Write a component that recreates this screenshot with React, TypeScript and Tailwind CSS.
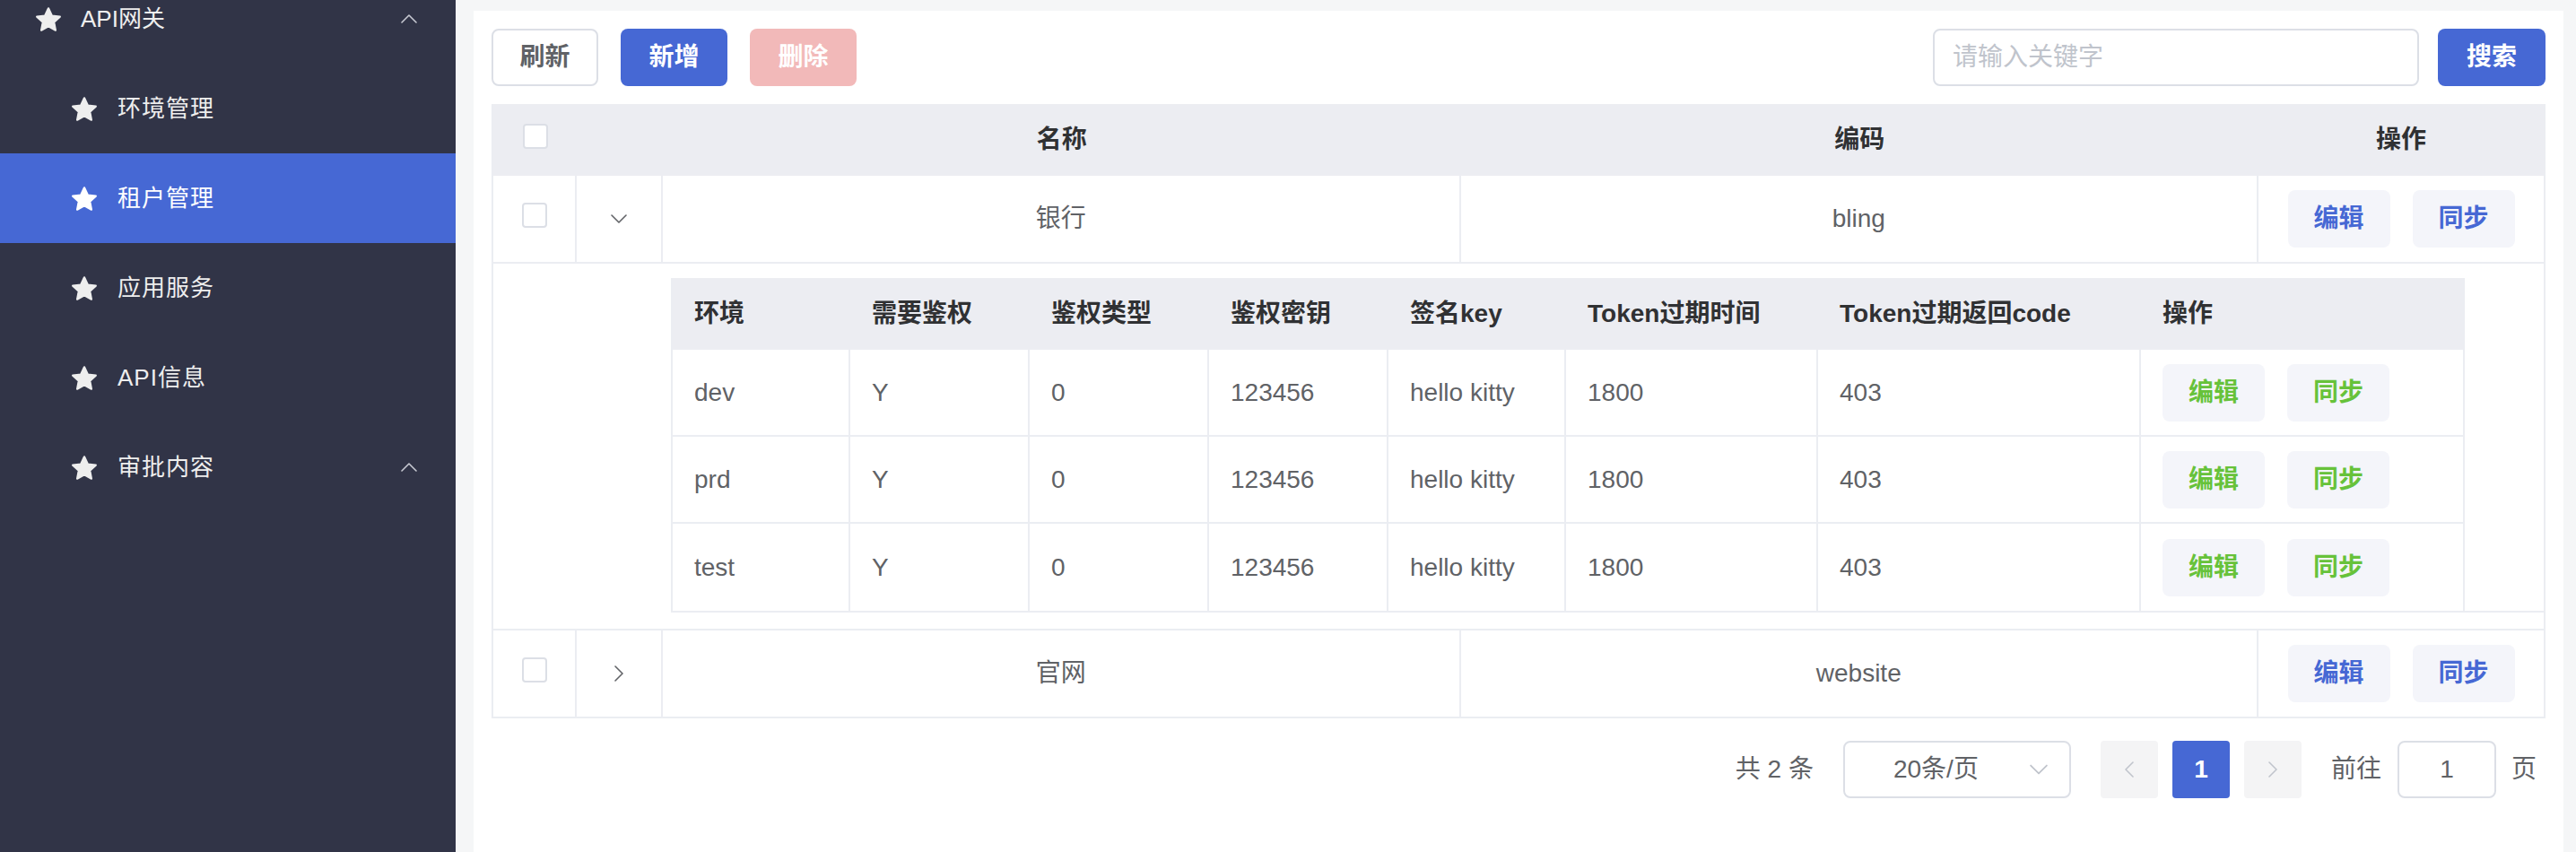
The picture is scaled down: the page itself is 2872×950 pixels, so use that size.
import type { ReactNode } from "react";

const font = "font-['Liberation_Sans','Noto_Sans_CJK_SC',sans-serif]";

function Star({ className }: { className?: string }) {
  return (
    <svg viewBox="1.7 1.8 20.6 19.6" className={className} fill="currentColor" stroke="currentColor" strokeWidth={1.6} strokeLinejoin="round">
      <path d="M12 2.6l2.85 6.05 6.6.82-4.87 4.55 1.26 6.55L12 17.3l-5.84 3.27 1.26-6.55L2.55 9.47l6.6-.82z" />
    </svg>
  );
}

function Chevron({ dir, className }: { dir: "up" | "down" | "left" | "right"; className?: string }) {
  const paths = {
    up: "M1 9 L9 1 L17 9",
    down: "M1 1 L9 9 L17 1",
    left: "M9 1 L1 9 L9 17",
    right: "M1 1 L9 9 L1 17",
  };
  const box = dir === "up" || dir === "down" ? "0 0 18 10" : "0 0 10 18";
  return (
    <svg viewBox={box} className={className} fill="none" stroke="currentColor" strokeWidth={1.6} strokeLinecap="round" strokeLinejoin="round">
      <path d={paths[dir]} />
    </svg>
  );
}

function Checkbox() {
  return <span className="mb-[8px] block h-[28px] w-[28px] rounded-[4px] border-2 border-[#dcdfe6] bg-white" />;
}

const menu = [
  { label: "环境管理" },
  { label: "租户管理", active: true },
  { label: "应用服务" },
  { label: "API信息" },
  { label: "审批内容", arrow: true },
];

function Sidebar() {
  return (
    <aside className="w-[508px] shrink-0 overflow-hidden bg-[#313447] text-[26px] text-[#eeeeee]">
      <div className="-mt-[29px]">
        <div className="flex h-[100px] items-center pl-[40px] pr-[43px]">
          <Star className="h-[27px] w-[28px]" />
          <span className="ml-[22px] flex-1">API网关</span>
          <Chevron dir="up" className="h-[10px] w-[18px] text-[#c8cad3]" />
        </div>
        {menu.map((item) => (
          <div
            key={item.label}
            className={
              "flex h-[100px] items-center pl-[80px] pr-[43px] " +
              (item.active ? "bg-[#4668d4] text-white" : "")
            }
          >
            <Star className="h-[27px] w-[28px]" />
            <span className="ml-[23px] flex-1 tracking-[1px]">{item.label}</span>
            {item.arrow && <Chevron dir="up" className="h-[10px] w-[18px] text-[#c8cad3]" />}
          </div>
        ))}
      </div>
    </aside>
  );
}

function OpButton({ children, color }: { children: ReactNode; color: string }) {
  return (
    <button className={"h-[64px] w-[114px] rounded-[8px] bg-[#f4f5fa] text-[28px] font-semibold " + color}>
      {children}
    </button>
  );
}

const envRows = [
  { env: "dev" },
  { env: "prd" },
  { env: "test" },
];

const nestedCols = [
  { title: "环境", w: "w-[198px]" },
  { title: "需要鉴权", w: "w-[200px]" },
  { title: "鉴权类型", w: "w-[200px]" },
  { title: "鉴权密钥", w: "w-[200px]" },
  { title: "签名key", w: "w-[198px]" },
  { title: "Token过期时间", w: "w-[281px]" },
  { title: "Token过期返回code", w: "w-[360px]" },
  { title: "操作", w: "w-[359px]" },
];

function NestedTable() {
  return (
    <div className="border-b-2 border-[#ebedf2]">
      <div className="w-[2000px] border-x-2 border-[#ebedf2]">
        <div className="flex h-[80px] bg-[#ecedf2] text-[#303133] font-bold">
          {nestedCols.map((c) => (
            <div key={c.title} className={"flex items-center pl-[24px] " + c.w}>
              {c.title}
            </div>
          ))}
        </div>
        {envRows.map((r, i) => {
          const values = [r.env, "Y", "0", "123456", "hello kitty", "1800", "403"];
          return (
            <div key={r.env} className={"flex h-[97px] " + (i < envRows.length - 1 ? "border-b-2 border-[#ebedf2]" : "h-[95px]")}>
              {values.map((v, j) => (
                <div key={j} className={"flex items-center border-r-2 border-[#ebedf2] pl-[24px] " + nestedCols[j].w}>
                  {v}
                </div>
              ))}
              <div className={"flex items-center gap-[25px] pl-[24px] " + nestedCols[7].w}>
                <OpButton color="text-[#67c23a]">编辑</OpButton>
                <OpButton color="text-[#67c23a]">同步</OpButton>
              </div>
            </div>
          );
        })}
      </div>
    </div>
  );
}

function MainRow({ name, code, open }: { name: string; code: string; open: boolean }) {
  return (
    <div className="flex h-[98px] border-b-2 border-[#ebedf2]">
      <div className="flex w-[93px] items-center justify-center border-r-2 border-[#ebedf2]">
        <Checkbox />
      </div>
      <div className="flex w-[96px] items-center justify-center border-r-2 border-[#ebedf2] text-[#606266]">
        {open ? (
          <Chevron dir="down" className="h-[10px] w-[18px]" />
        ) : (
          <Chevron dir="right" className="h-[18px] w-[10px]" />
        )}
      </div>
      <div className="flex flex-1 items-center justify-center border-r-2 border-[#ebedf2]">{name}</div>
      <div className="flex flex-1 items-center justify-center border-r-2 border-[#ebedf2]">{code}</div>
      <div className="flex w-[318px] items-center justify-center gap-[25px]">
        <OpButton color="text-[#4668d4]">编辑</OpButton>
        <OpButton color="text-[#4668d4]">同步</OpButton>
      </div>
    </div>
  );
}

function Pagination() {
  return (
    <div className="mt-[25px] flex h-[64px] items-center justify-end pr-[10px] text-[#606266]">
      <span className="mr-[33px]">共 2 条</span>
      <div className="flex h-[64px] w-[254px] items-center rounded-[8px] border-2 border-[#dcdfe6] pl-[54px] pr-[24px]">
        <span className="flex-1">20条/页</span>
        <Chevron dir="down" className="h-[12px] w-[20px] text-[#c0c4cc]" />
      </div>
      <button className="ml-[33px] flex h-[64px] w-[64px] items-center justify-center rounded-[4px] bg-[#f4f4f5] text-[#c0c4cc]">
        <Chevron dir="left" className="h-[18px] w-[10px]" />
      </button>
      <button className="ml-[16px] h-[64px] w-[64px] rounded-[4px] bg-[#4668d4] font-bold text-white">1</button>
      <button className="ml-[16px] flex h-[64px] w-[64px] items-center justify-center rounded-[4px] bg-[#f4f4f5] text-[#c0c4cc]">
        <Chevron dir="right" className="h-[18px] w-[10px]" />
      </button>
      <span className="ml-[33px]">前往</span>
      <div className="ml-[18px] flex h-[64px] w-[110px] items-center justify-center rounded-[8px] border-2 border-[#dcdfe6]">
        1
      </div>
      <span className="ml-[17px]">页</span>
    </div>
  );
}

export default function App() {
  return (
    <div className={"flex h-[950px] w-[2872px] overflow-hidden bg-[#f5f6f7] " + font}>
      <Sidebar />
      <main className="flex-1 pl-[20px] pr-[14px] pt-[12px]">
        <div className="h-full bg-white p-[20px] text-[28px] text-[#606266]">
          <div className="flex items-center">
            <button className="h-[64px] w-[119px] rounded-[8px] border-2 border-[#dcdfe6] bg-white font-semibold text-[#606266]">
              刷新
            </button>
            <button className="ml-[25px] h-[64px] w-[119px] rounded-[8px] bg-[#4668d4] font-semibold text-white">
              新增
            </button>
            <button className="ml-[25px] h-[64px] w-[119px] rounded-[8px] bg-[#f2b9b9] font-semibold text-white">
              删除
            </button>
            <div className="flex-1" />
            <div className="flex h-[64px] w-[542px] items-center rounded-[8px] border-2 border-[#dcdfe6] px-[20px] text-[#c0c4cc]">
              请输入关键字
            </div>
            <button className="ml-[21px] h-[64px] w-[120px] rounded-[8px] bg-[#4668d4] font-semibold text-white">
              搜索
            </button>
          </div>

          <div className="mt-[20px] border-x-2 border-[#ebedf2]">
            <div className="flex h-[80px] bg-[#ecedf2] font-bold text-[#303133]">
              <div className="flex w-[93px] items-center justify-center">
                <Checkbox />
              </div>
              <div className="w-[96px]" />
              <div className="flex flex-1 items-center justify-center">名称</div>
              <div className="flex flex-1 items-center justify-center">编码</div>
              <div className="flex w-[318px] items-center justify-center">操作</div>
            </div>
            <MainRow name="银行" code="bling" open />
            <div className="border-b-2 border-[#ebedf2] pb-[18px] pl-[198px] pt-[16px]">
              <NestedTable />
            </div>
            <MainRow name="官网" code="website" open={false} />
          </div>

          <Pagination />
        </div>
      </main>
    </div>
  );
}
